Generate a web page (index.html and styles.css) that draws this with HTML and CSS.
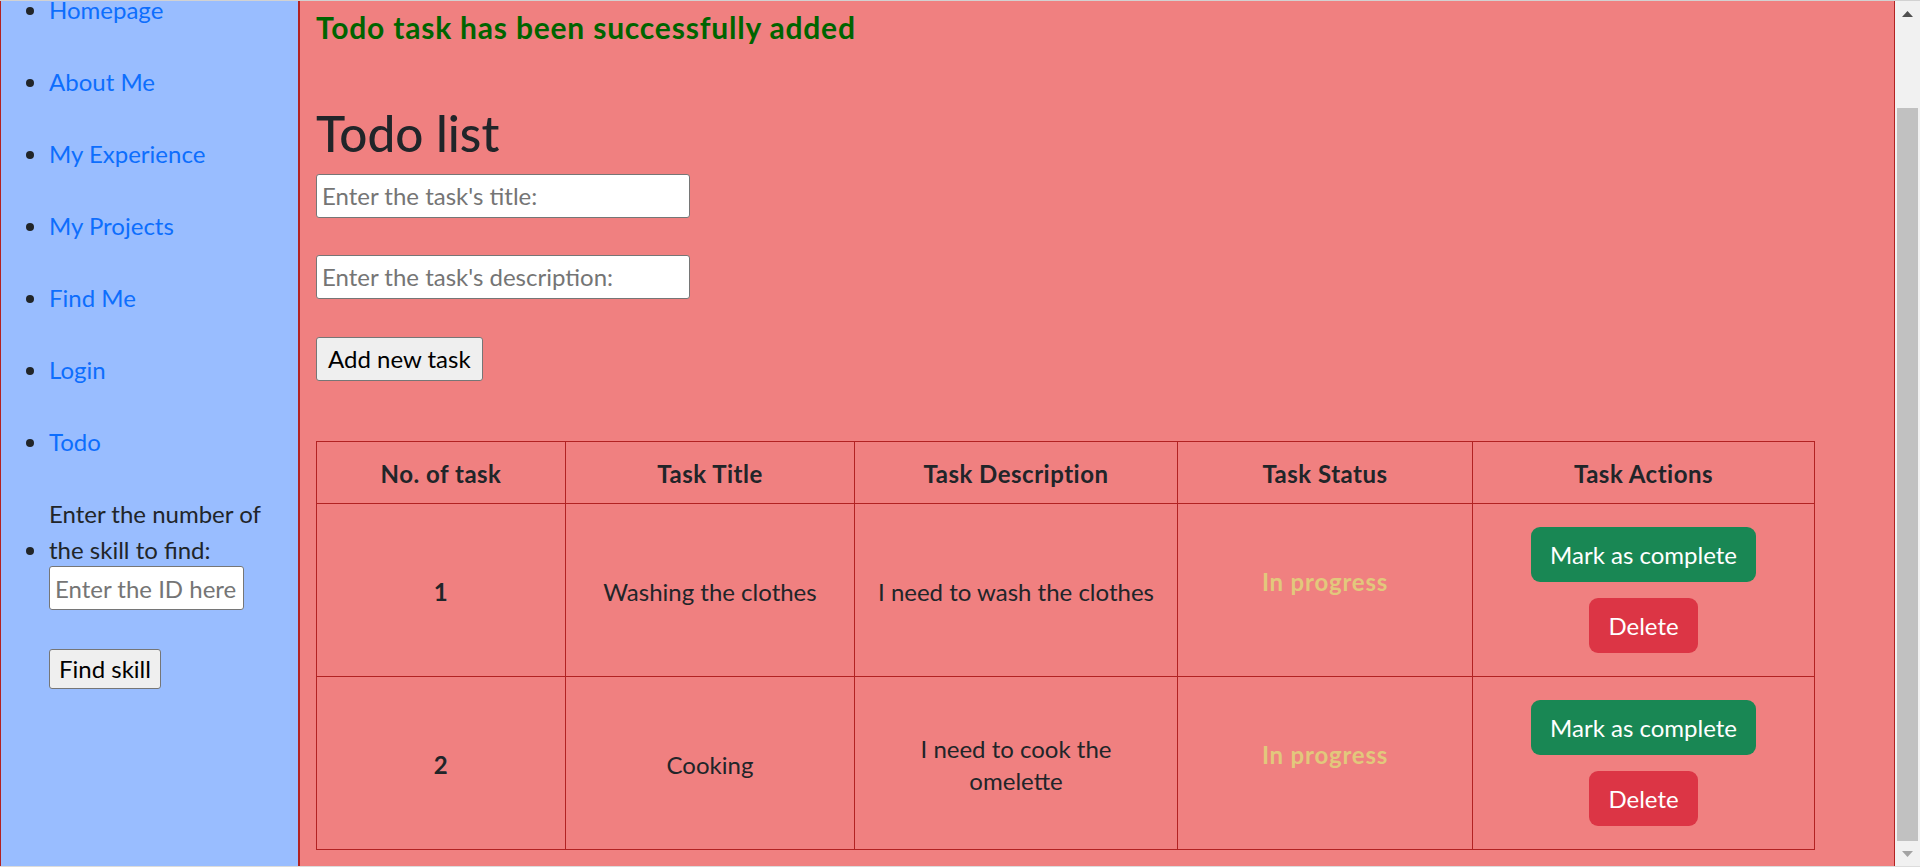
FILE: index.html
```html
<!DOCTYPE html>
<html lang="en">
<head>
<meta charset="utf-8">
<title>Todo list</title>
<link rel="stylesheet" href="styles.css">
</head>
<body>
<div class="frame">
  <div class="topline"></div>
  <div class="window">
    <aside class="sidebar">
      <ul class="nav">
        <li><a href="#">Homepage</a></li>
        <li><a href="#">About Me</a></li>
        <li><a href="#">My Experience</a></li>
        <li><a href="#">My Projects</a></li>
        <li><a href="#">Find Me</a></li>
        <li><a href="#">Login</a></li>
        <li><a href="#">Todo</a></li>
        <li class="skill-item"><label class="skill-label" for="skillId">Enter the number of the skill to find:</label><input id="skillId" class="skill-input" type="text" placeholder="Enter the ID here"><button class="plain-btn skill-btn" type="button">Find skill</button></li>
      </ul>
    </aside>
    <main class="content">
      <p class="success">Todo task has been successfully added</p>
      <h2 class="title">Todo list</h2>
      <input class="task-input" type="text" placeholder="Enter the task's title:">
      <input class="task-input second" type="text" placeholder="Enter the task's description:">
      <button class="plain-btn add-btn" type="button">Add new task</button>
      <table class="todo">
        <colgroup>
          <col class="c1"><col class="c2"><col class="c3"><col class="c4"><col class="c5">
        </colgroup>
        <thead>
          <tr class="head-row">
            <th>No. of task</th>
            <th>Task Title</th>
            <th>Task Description</th>
            <th>Task Status</th>
            <th>Task Actions</th>
          </tr>
        </thead>
        <tbody>
          <tr class="body-row">
            <th>1</th>
            <td>Washing the clothes</td>
            <td>I need to wash the clothes</td>
            <td><p class="status">In progress</p></td>
            <td class="action-cell"><div class="actions"><button class="btn btn-success" type="button">Mark as complete</button><button class="btn btn-danger" type="button">Delete</button></div></td>
          </tr>
          <tr class="body-row">
            <th>2</th>
            <td>Cooking</td>
            <td>I need to cook the omelette</td>
            <td><p class="status">In progress</p></td>
            <td class="action-cell"><div class="actions"><button class="btn btn-success" type="button">Mark as complete</button><button class="btn btn-danger" type="button">Delete</button></div></td>
          </tr>
        </tbody>
      </table>
    </main>
    <div class="scrollbar">
      <div class="sb-arrow"><svg width="11" height="6" viewBox="0 0 11 6"><polygon points="0,6 5.5,0 11,6" fill="#505050"/></svg></div>
      <div class="sb-track"><div class="sb-thumb"></div></div>
      <div class="sb-arrow"><svg width="11" height="6" viewBox="0 0 11 6"><polygon points="0,0 11,0 5.5,6" fill="#a3a3a3"/></svg></div>
    </div>
  </div>
  <div class="bottomline"></div>
</div>
</body>
</html>
```

FILE: styles.css
```css
* { box-sizing: border-box; }
html, body { margin: 0; height: 100%; }
body {
  font-family: Lato, "Open Sans", sans-serif;
  font-size: 24px;
  color: #212529;
  background: #ffffff;
  overflow: hidden;
}
.frame { display: flex; flex-direction: column; height: 867px; }
.topline { flex: none; height: 1px; background: #d2d2d2; }
.bottomline { flex: none; height: 1px; background: #dcdcdc; }
.window { flex: 1; min-height: 0; display: flex; overflow: hidden; }

/* sidebar */
.sidebar {
  flex: none;
  width: 299px;
  background: #99bdff;
  border-left: 1px solid #b22222;
  border-right: 1px solid #b22222;
}
.nav { margin: -9px 0 0; padding: 0 0 0 48px; list-style: disc; }
.nav li { line-height: 36px; margin-bottom: 36px; }
.nav a { color: #0d6efd; text-decoration: none; }
.skill-label { display: inline-block; line-height: 36px; }
.skill-input {
  display: block;
  margin-top: -2px;
  width: 195px;
  height: 44px;
  padding: 0 5px;
  font-family: inherit;
  font-size: 24px;
  color: #212529;
  background: #ffffff;
  border: 1px solid #767676;
  border-radius: 3px;
}
.skill-input::placeholder, .task-input::placeholder { color: #757575; }
.plain-btn {
  font-family: inherit;
  font-size: 24px;
  line-height: 1;
  color: #000000;
  background: #efefef;
  border: 1px solid #767676;
  border-radius: 3px;
}
.skill-btn { display: block; margin-top: 39px; height: 40px; padding: 0 9px; }

/* main */
.content {
  flex: 1;
  min-width: 0;
  background: #f08080;
  border-left: 1px solid #b22222;
  border-right: 1px solid #b22222;
  padding: 8px 0 0 16px;
}
.success {
  margin: 0;
  font-size: 30px;
  line-height: 36px;
  letter-spacing: 0.8px;
  font-weight: 700;
  color: #006400;
}
.title { margin: 60px 0 11px; font-size: 49.5px; font-weight: 500; line-height: 57.6px; }
.task-input {
  display: block;
  width: 374px;
  height: 44px;
  padding: 0 5px;
  font-family: inherit;
  font-size: 24px;
  color: #212529;
  background: #ffffff;
  border: 1px solid #767676;
  border-radius: 3px;
}
.task-input.second { margin-top: 37px; }
.add-btn { display: block; margin-top: 38px; height: 44px; padding: 0 11px; }

/* table */
.todo {
  margin-top: 60px;
  width: 1498px;
  table-layout: fixed;
  border-collapse: collapse;
  text-align: center;
  line-height: 32px;
}
.c1 { width: 249px; }
.c2 { width: 289px; }
.c3 { width: 323px; }
.c4 { width: 295px; }
.c5 { width: 342px; }
.todo th, .todo td {
  border: 1px solid #b22222;
  padding: 14px 18px 10px;
  vertical-align: middle;
}
.todo .action-cell { padding: 12px 18px; }
.todo th { font-weight: 700; letter-spacing: 0.5px; }
.head-row { height: 62px; }
.body-row { height: 173px; }
.status { margin: 0 0 19px; font-weight: 700; letter-spacing: 0.8px; color: #e2c87c; }
.actions { display: flex; flex-direction: column; align-items: center; gap: 16px; }
.btn {
  font-family: inherit;
  font-size: 24px;
  line-height: 35px;
  padding: 9px 18px;
  color: #ffffff;
  border: 1px solid transparent;
  border-radius: 9px;
}
.btn-success { background: #198754; }
.btn-danger { background: #dc3545; }

/* scrollbar */
.scrollbar { flex: none; width: 25px; background: #f1f1f1; display: flex; flex-direction: column; }
.sb-arrow { flex: none; height: 25px; display: flex; align-items: center; justify-content: center; }
.sb-arrow svg { display: block; }
.sb-track { flex: 1; display: flex; flex-direction: column; padding: 82px 2px 0; }
.sb-thumb { flex: 1; background: #c1c1c1; }
```
